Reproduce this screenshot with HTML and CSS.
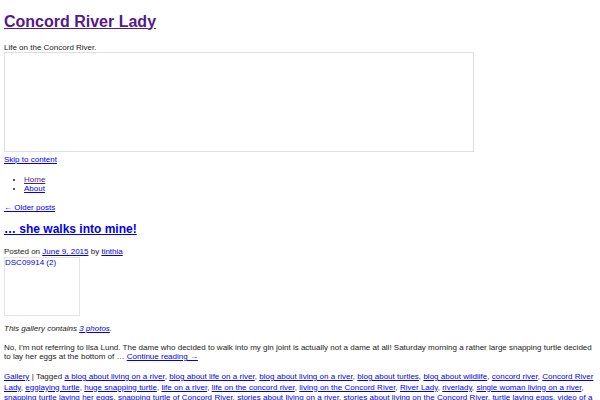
FILE: index.html
```html
<!DOCTYPE html>
<html lang="en">
<head>
<meta charset="utf-8">
<title>Concord River Lady</title>
<link rel="stylesheet" href="styles.css">
</head>
<body>
<header class="site-header">
  <h1 class="site-title"><a class="visited" href="#">Concord River Lady</a></h1>
  <p class="site-desc">Life on the Concord River.</p>
  <div class="header-image"></div>
</header>
<a class="skip" href="#content">Skip to content</a>
<ul class="menu">
  <li><a class="visited" href="#">Home</a></li>
  <li><a href="#">About</a></li>
</ul>
<div class="nav-above"><a href="#">← Older posts</a></div>
<article class="post" id="content">
  <h2 class="entry-title"><a href="#">… she walks into mine!</a></h2>
  <div class="entry-meta">Posted on <a href="#">June 9, 2015</a> by <a href="#">tinthia</a></div>
  <a class="gallery-thumb" href="#">DSC09914 (2)</a>
  <p class="gallery-count">This gallery contains <a href="#">3 photos</a>.</p>
  <p class="summary">No, I’m not referring to Ilsa Lund. The dame who decided to walk into my gin joint is actually not a dame at all! Saturday morning a rather large snapping turtle decided to lay her eggs at the bottom of … <a href="#">Continue reading →</a></p>
  <div class="entry-utility"><a href="#">Gallery</a> | Tagged <a href="#">a blog about living on a river</a>, <a href="#">blog about life on a river</a>, <a href="#">blog about living on a river</a>, <a href="#">blog about turtles</a>, <a href="#">blog about wildlife</a>, <a href="#">concord river</a>, <a href="#">Concord River Lady</a>, <a href="#">egglaying turtle</a>, <a href="#">huge snapping turtle</a>, <a href="#">life on a river</a>, <a href="#">life on the concord river</a>, <a href="#">living on the Concord River</a>, <a href="#">River Lady</a>, <a href="#">riverlady</a>, <a href="#">single woman living on a river</a>, <a href="#">snapping turtle laying her eggs</a>, <a href="#">snapping turtle of Concord River</a>, <a href="#">stories about living on a river</a>, <a href="#">stories about living on the Concord River</a>, <a href="#">turtle laying eggs</a>, <a href="#">video of a turtle laying eggs</a> | <a href="#">Leave a comment</a></div>
</article>
</body>
</html>
```
FILE: styles.css
```css
html, body {
  background: #fff;
}
body {
  margin: 0 4px;
  font-family: "Liberation Sans", Arial, sans-serif;
  font-size: 8px;
  line-height: 1.15;
  color: #222;
}
a {
  color: #0000ee;
  text-decoration: underline;
}
a.visited {
  color: #551a8b;
}
.site-title {
  margin: 12.5px 0 0;
  font-size: 16px;
  font-weight: bold;
  line-height: 1.12;
}
.site-desc {
  margin: 12.5px 0 0;
}
.header-image {
  width: 470px;
  height: 100px;
  box-sizing: border-box;
  border: 1px solid #dedede;
}
.skip {
  display: block;
  width: max-content;
  margin-top: 3px;
}
.menu {
  margin: 10.3px 0 0;
  padding-left: 20px;
  list-style: disc;
}
.nav-above {
  margin-top: 10.5px;
}
.entry-title {
  margin: 10.7px 0 0;
  font-size: 12px;
  font-weight: bold;
  line-height: 1.15;
}
.entry-meta {
  margin-top: 10.3px;
}
.gallery-thumb {
  display: block;
  box-sizing: border-box;
  width: 76px;
  height: 59px;
  padding: 0;
  border: 1px solid #e4e4e4;
  text-decoration: none;
}
.gallery-count {
  margin: 8.3px 0 0;
  font-style: italic;
}
.summary {
  margin: 9.6px 0 0;
}
.entry-utility {
  margin-top: 11px;
  line-height: 10.6px;
  word-spacing: 0.1px;
}
```
